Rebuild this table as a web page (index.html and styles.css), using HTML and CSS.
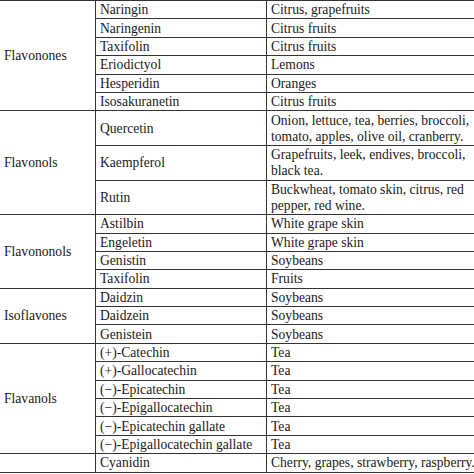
FILE: index.html
```html
<!DOCTYPE html>
<html>
<head>
<meta charset="utf-8">
<link rel="stylesheet" href="styles.css">
</head>
<body>
<table class="tbl">
  <colgroup>
    <col class="c-group">
    <col class="c-name">
    <col class="c-source">
  </colgroup>
  <tbody>
    <tr class="first"><td class="grp" rowspan="6">Flavonones</td><td>Naringin</td><td>Citrus, grapefruits</td></tr>
    <tr><td>Naringenin</td><td>Citrus fruits</td></tr>
    <tr><td>Taxifolin</td><td>Citrus fruits</td></tr>
    <tr><td>Eriodictyol</td><td>Lemons</td></tr>
    <tr><td>Hesperidin</td><td>Oranges</td></tr>
    <tr><td>Isosakuranetin</td><td>Citrus fruits</td></tr>

    <tr><td class="grp" rowspan="3">Flavonols</td><td>Quercetin</td><td>Onion, lettuce, tea, berries, broccoli,<br>tomato, apples, olive oil, cranberry.</td></tr>
    <tr><td>Kaempferol</td><td>Grapefruits, leek, endives, broccoli,<br>black tea.</td></tr>
    <tr><td>Rutin</td><td>Buckwheat, tomato skin, citrus, red<br>pepper, red wine.</td></tr>

    <tr><td class="grp" rowspan="4">Flavononols</td><td>Astilbin</td><td>White grape skin</td></tr>
    <tr><td>Engeletin</td><td>White grape skin</td></tr>
    <tr><td>Genistin</td><td>Soybeans</td></tr>
    <tr><td>Taxifolin</td><td>Fruits</td></tr>

    <tr><td class="grp" rowspan="3">Isoflavones</td><td>Daidzin</td><td>Soybeans</td></tr>
    <tr><td>Daidzein</td><td>Soybeans</td></tr>
    <tr><td>Genistein</td><td>Soybeans</td></tr>

    <tr><td class="grp" rowspan="6">Flavanols</td><td>(+)-Catechin</td><td>Tea</td></tr>
    <tr><td>(+)-Gallocatechin</td><td>Tea</td></tr>
    <tr><td>(−)-Epicatechin</td><td>Tea</td></tr>
    <tr><td>(−)-Epigallocatechin</td><td>Tea</td></tr>
    <tr><td>(−)-Epicatechin gallate</td><td>Tea</td></tr>
    <tr><td>(−)-Epigallocatechin gallate</td><td>Tea</td></tr>

    <tr><td class="grp"></td><td>Cyanidin</td><td>Cherry, grapes, strawberry, raspberry.</td></tr>
  </tbody>
</table>
</body>
</html>
```

FILE: styles.css
```css
html, body {
  margin: 0;
  padding: 0;
  background: #ffffff;
  overflow: hidden;
}

.tbl {
  border-collapse: collapse;
  table-layout: fixed;
  width: 474px;
  font-family: "Liberation Serif", "Times New Roman", serif;
  font-size: 13.6px;
  color: #1a1a1a;
}

.c-group { width: 95px; }
.c-name { width: 171px; }
.c-source { width: 208px; }

.tbl td {
  border: 1px solid #333333;
  padding: 1.2px 4px 0 4.5px;
  line-height: 16.2px;
  white-space: nowrap;
  vertical-align: middle;
  text-align: left;
  overflow: hidden;
}

.tbl td:first-child {
  border-left: none;
}

.tbl td:last-child {
  border-right: none;
  padding-right: 0;
}

.tbl td.grp {
  padding-left: 4px;
}
```
